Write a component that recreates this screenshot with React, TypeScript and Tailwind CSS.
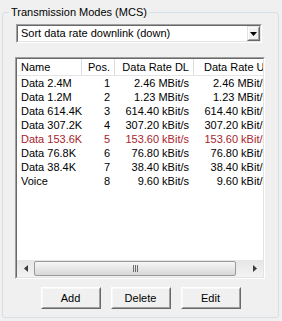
import React from 'react';

type Row = { name: string; pos: number; dl: string; ul: string; active?: boolean };

const rows: Row[] = [
  { name: 'Data 2.4M', pos: 1, dl: '2.46 MBit/s', ul: '2.46 MBit/s' },
  { name: 'Data 1.2M', pos: 2, dl: '1.23 MBit/s', ul: '1.23 MBit/s' },
  { name: 'Data 614.4K', pos: 3, dl: '614.40 kBit/s', ul: '614.40 kBit/s' },
  { name: 'Data 307.2K', pos: 4, dl: '307.20 kBit/s', ul: '307.20 kBit/s' },
  { name: 'Data 153.6K', pos: 5, dl: '153.60 kBit/s', ul: '153.60 kBit/s', active: true },
  { name: 'Data 76.8K', pos: 6, dl: '76.80 kBit/s', ul: '76.80 kBit/s' },
  { name: 'Data 38.4K', pos: 7, dl: '38.40 kBit/s', ul: '38.40 kBit/s' },
  { name: 'Voice', pos: 8, dl: '9.60 kBit/s', ul: '9.60 kBit/s' },
];

function Sunken({ className, children }: { className: string; children: React.ReactNode }) {
  return (
    <div className={`border border-t-[#a0a0a0] border-l-[#a0a0a0] border-r-white border-b-white ${className}`}>
      <div className="h-full w-full border border-t-[#696969] border-l-[#696969] border-r-[#e3e3e3] border-b-[#e3e3e3] bg-white">
        {children}
      </div>
    </div>
  );
}

function WinButton({ label }: { label: string }) {
  return (
    <button className="h-[22px] w-[60px] border border-t-white border-l-white border-r-[#696969] border-b-[#696969]">
      <div className="flex h-full w-full items-center justify-center border border-t-[#f8f8f8] border-l-[#f8f8f8] border-r-[#a0a0a0] border-b-[#a0a0a0] bg-[#f0f0f0] text-black">
        {label}
      </div>
    </button>
  );
}

export default function App() {
  return (
    <div
      className="h-[321px] w-[282px] bg-[#f0f0f0] pl-[2px] pt-[12px] text-[11px] text-black"
      style={{ fontFamily: '"Liberation Sans", Arial, sans-serif' }}
    >
      {/* Group box */}
      <div className="relative h-[306px] w-[277px] rounded-[3px] border border-[#d5dfe5] pt-[11px]">
        <span className="absolute -top-[7px] left-[6px] bg-[#f0f0f0] px-[2px] leading-[13px]">
          Transmission Modes (MCS)
        </span>

        {/* Sort dropdown */}
        <Sunken className="ml-[13px] h-[19px] w-[246px]">
          <div className="flex h-full items-center">
            <span className="flex-1 pl-[3px] leading-[15px]">Sort data rate downlink (down)</span>
            <div className="h-full w-[13px] border border-t-[#e3e3e3] border-l-[#e3e3e3] border-r-[#696969] border-b-[#696969]">
              <div className="flex h-full w-full items-center justify-center border border-t-white border-l-white border-r-[#a0a0a0] border-b-[#a0a0a0] bg-[#f0f0f0]">
                <svg width="7" height="4" viewBox="0 0 7 4">
                  <path d="M0 0h7L3.5 4z" fill="#000" />
                </svg>
              </div>
            </div>
          </div>
        </Sunken>

        {/* List view */}
        <Sunken className="ml-[12px] mt-[14px] h-[222px] w-[250px]">
          <div className="flex h-full flex-col overflow-hidden">
            <div className="flex-1 overflow-hidden">
              <div className="flex h-[17px] w-[256px] border-b border-[#e5e5e5] leading-[16px]">
                <div className="w-[65px] shrink-0 border-r border-[#dcdcdc] pl-[4px]">Name</div>
                <div className="w-[33px] shrink-0 border-r border-[#dcdcdc] pr-[4px] text-right">Pos.</div>
                <div className="w-[79px] shrink-0 whitespace-nowrap border-r border-[#dcdcdc] pr-[4px] text-right">Data Rate DL</div>
                <div className="w-[79px] shrink-0 whitespace-nowrap pl-[10px]">Data Rate UL</div>
              </div>
              {rows.map((r) => (
                <div
                  key={r.name}
                  className={`flex h-[14px] w-[256px] whitespace-nowrap leading-[14px] ${r.active ? 'text-[#a8242c]' : 'text-black'}`}
                >
                  <div className="w-[65px] shrink-0 pl-[4px]">{r.name}</div>
                  <div className="w-[33px] shrink-0 pr-[5px] text-right">{r.pos}</div>
                  <div className="w-[79px] shrink-0 pr-[5px] text-right">{r.dl}</div>
                  <div className="w-[79px] shrink-0 pr-[5px] text-right">{r.ul}</div>
                </div>
              ))}
            </div>

            {/* Horizontal scrollbar */}
            <div className="flex h-[17px] shrink-0 items-center bg-gradient-to-b from-[#e6e6e6] to-[#f3f3f3]">
              <div className="flex h-full w-[17px] items-center justify-center">
                <svg width="4" height="7" viewBox="0 0 4 7">
                  <path d="M4 0v7L0 3.5z" fill="#3c3c3c" />
                </svg>
              </div>
              <div className="flex h-[15px] w-[202px] items-center justify-center rounded-[2px] border border-[#9a9a9a] bg-gradient-to-b from-[#f6f6f6] to-[#d8d8d8]">
                <div className="flex gap-[1px]">
                  <div className="h-[7px] w-[1px] bg-[#6a6a6a]" />
                  <div className="h-[7px] w-[1px] bg-[#6a6a6a]" />
                  <div className="h-[7px] w-[1px] bg-[#6a6a6a]" />
                </div>
              </div>
              <div className="flex-1" />
              <div className="flex h-full w-[17px] items-center justify-center">
                <svg width="4" height="7" viewBox="0 0 4 7">
                  <path d="M0 0v7L4 3.5z" fill="#3c3c3c" />
                </svg>
              </div>
            </div>
          </div>
        </Sunken>

        {/* Buttons */}
        <div className="mt-[8px] flex justify-center gap-[10px]">
          <WinButton label="Add" />
          <WinButton label="Delete" />
          <WinButton label="Edit" />
        </div>
      </div>
    </div>
  );
}
